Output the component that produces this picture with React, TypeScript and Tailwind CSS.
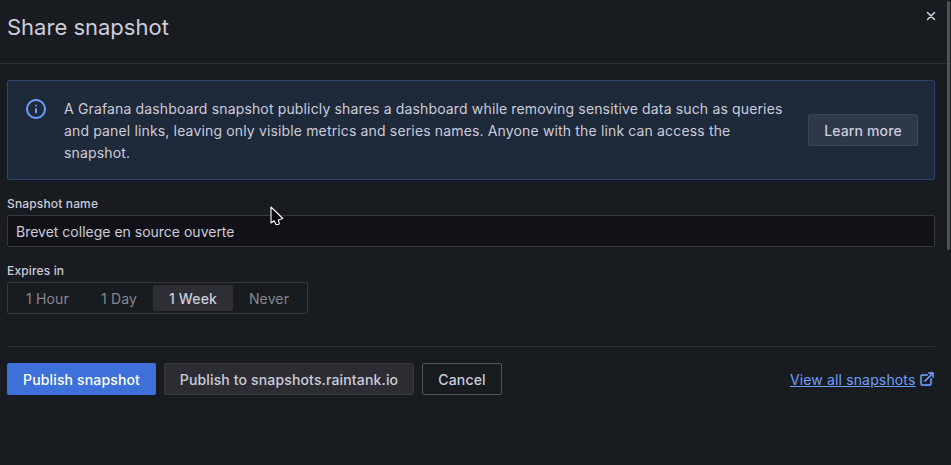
import React from "react";

const font = "font-['Inter',sans-serif]";
const options = ["1 Hour", "1 Day", "1 Week", "Never"];
const optionWidths = ["w-[76px] pl-px", "w-[68px]", "w-[80px]", "w-[72px]"];

export default function App() {
  return (
    <div className={`relative h-[465px] w-[951px] overflow-hidden bg-[#181b1f] text-[14px] tracking-[0.15px] text-[#ccccdc] ${font}`}>
      <header className="flex h-16 items-start justify-between border-b border-[#2d3036] pl-[7px] pr-[15px]">
        <h1 className="mt-[13px] text-[22px] leading-7 tracking-normal">Share snapshot</h1>
        <svg className="mt-[11px]" width="10" height="10" viewBox="0 0 10 10" stroke="#d0d0df" strokeWidth="1.5" strokeLinecap="round">
          <path d="M1.500 1.500 8.500 8.500M8.500 1.500 1.500 8.500" />
        </svg>
      </header>
      <main className="ml-[7px] mr-4 pt-4">
        <section className="flex h-[100px] items-center rounded-[2px] border border-[#2d4470] bg-[#1e2939] pl-[17px] pr-4">
          <svg className="mt-[17px] shrink-0 self-start" width="22" height="22" viewBox="0 0 22 22" fill="none" stroke="#6e9fff" strokeWidth="2" strokeLinecap="round">
            <circle cx="11" cy="11" r="9" />
            <path d="M11 11v3.500M11 7.500v.1" />
          </svg>
          <p className="ml-[17px] w-[728px] pt-[2px] leading-[22px]">A Grafana dashboard snapshot publicly shares a dashboard while removing sensitive data such as queries and panel links, leaving only visible metrics and series names. Anyone with the link can access the snapshot.</p>
          <button className="ml-auto h-8 w-[110px] shrink-0 rounded-[2px] border border-[#3a4554] bg-[#2f3849] font-medium">Learn more</button>
        </section>
        <label className="mt-4 block text-[12px] font-medium leading-[15px]">Snapshot name</label>
        <div className="mt-1 flex h-8 items-center rounded-[2px] border border-[#36383d] bg-[#111217] px-2 tracking-normal">Brevet college en source ouverte</div>
        <label className="mt-4 block text-[12px] font-medium leading-[15px]">Expires in</label>
        <div className="mt-1 flex h-8 w-[301px] rounded-[2px] border border-[#36383d] px-[1px] py-[2px]">
          {options.map((o, i) => (
            <div key={o} className={`flex items-center justify-center rounded-[2px] ${optionWidths[i]} ${i === 2 ? "bg-[#2d2f34] font-medium" : "text-[#85868f]"}`}>{o}</div>
          ))}
        </div>
        <footer className="mt-8 flex items-center border-t border-[#2d3036] pt-4 font-medium">
          <button className="h-8 w-[149px] rounded-[2px] bg-[#3d71d9] text-white">Publish snapshot</button>
          <button className="ml-2 h-8 w-[250px] rounded-[2px] border border-[#36383d] bg-[#2c2d32]">Publish to snapshots.raintank.io</button>
          <button className="ml-2 h-8 w-20 rounded-[2px] border border-[#505257]">Cancel</button>
          <a className="ml-auto flex items-center gap-[3.5px] font-normal text-[#6e9fff]">
            <span className="underline">View all snapshots</span>
            <svg className="-mt-px" width="16" height="16" viewBox="0 0 24 24" fill="currentColor" stroke="currentColor" strokeWidth=".6">
              <path d="M18 10.820a1 1 0 0 0-1 1V19a1 1 0 0 1-1 1H5a1 1 0 0 1-1-1V8a1 1 0 0 1 1-1h7.180a1 1 0 0 0 0-2H5a3 3 0 0 0-3 3v11a3 3 0 0 0 3 3h11a3 3 0 0 0 3-3v-7.180a1 1 0 0 0-1-1Zm3.920-8.200a1 1 0 0 0-.54-.54A1 1 0 0 0 21 2h-6a1 1 0 0 0 0 2h3.590L8.290 14.290a1 1 0 0 0 1.420 1.420L20 5.410V9a1 1 0 0 0 2 0V3a1 1 0 0 0-.08-.38Z" />
            </svg>
          </a>
        </footer>
      </main>
      <div className="absolute right-px top-px h-[249px] w-[3px] rounded-full bg-[#515257]" />
      <svg className="absolute left-[270px] top-[206px]" width="14" height="21" viewBox="0 0 14 21" fill="#000" stroke="#fff" strokeWidth="1.100" strokeLinejoin="round">
        <path d="M1 1V17L4.200 14.800 6 18.500 8.700 18.500 9.300 17.500 8.300 14 12.800 12.500Z" />
      </svg>
    </div>
  );
}
